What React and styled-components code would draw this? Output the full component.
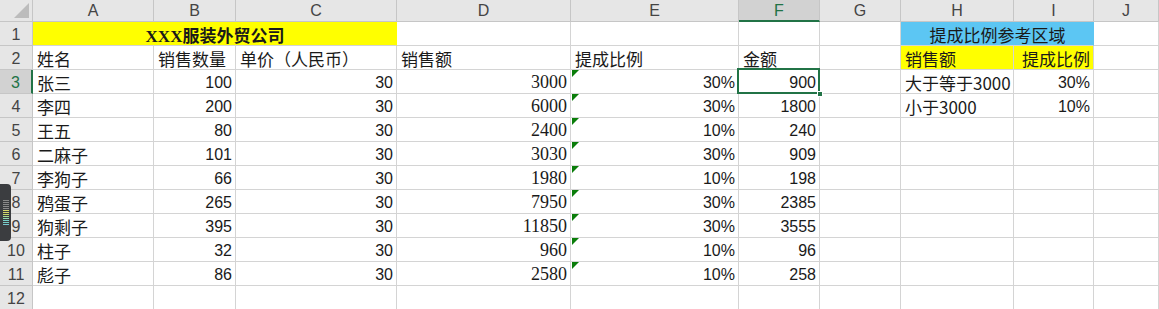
import styled, { createGlobalStyle, css } from "styled-components";

const GlobalStyle = createGlobalStyle`
  html, body {
    margin: 0;
    padding: 0;
    background: #ffffff;
    overflow: hidden;
  }
  * { box-sizing: border-box; }
`;

const cjk = `"Noto Sans CJK SC", "Noto Sans", sans-serif`;
const sans = `"Liberation Sans", "Noto Sans CJK SC", sans-serif`;
const serif = `"Liberation Serif", "Noto Sans CJK SC", serif`;
const green = "#217346";

const Sheet = styled.div`
  position: relative;
  display: grid;
  grid-template-columns: 33px 121px 82px 161px 174px 168px 81px 81px 113px 80px 1fr;
  grid-template-rows: 22px repeat(12, 24px);
  width: 1159px;
  height: 309px;
  overflow: hidden;
  background: #fff;
`;

const Corner = styled.div`
  position: relative;
  background: #e6e6e6;
  border-right: 1px solid #c6c6c6;
  border-bottom: 1px solid #c6c6c6;

  &::after {
    content: "";
    position: absolute;
    right: 3px;
    bottom: 3px;
    width: 0;
    height: 0;
    border-left: 15px solid transparent;
    border-bottom: 15px solid #bcbcbc;
  }
`;

const ColHead = styled.div`
  display: flex;
  align-items: center;
  justify-content: center;
  font-family: ${sans};
  font-size: 16px;
  color: ${(p) => (p.$active ? green : "#444")};
  background: ${(p) => (p.$active ? "#d2d2d2" : "#e6e6e6")};
  border-right: 1px solid #c6c6c6;
  border-bottom: ${(p) => (p.$active ? `2px solid ${green}` : "1px solid #c6c6c6")};
  padding-top: ${(p) => (p.$active ? "1px" : "0")};
`;

const RowHead = styled.div`
  display: flex;
  align-items: center;
  justify-content: center;
  font-family: ${sans};
  font-size: 16px;
  padding-top: 2px;
  color: ${(p) => (p.$active ? green : "#444")};
  background: ${(p) => (p.$active ? "#d2d2d2" : "#e6e6e6")};
  border-right: ${(p) => (p.$active ? `2px solid ${green}` : "1px solid #c6c6c6")};
  border-bottom: 1px solid #c6c6c6;
`;

const fonts = { cjk, sans, serif };

const Cell = styled.div`
  position: relative;
  display: flex;
  align-items: center;
  justify-content: ${(p) =>
    p.$align === "right" ? "flex-end" : p.$align === "center" ? "center" : "flex-start"};
  grid-column: span ${(p) => p.$span || 1};
  padding: 2px 3px 0 4px;
  font-family: ${(p) => fonts[p.$font || "cjk"]};
  font-size: ${(p) => p.$size || (p.$font === "sans" ? 16 : 17)}px;
  font-weight: ${(p) => (p.$bold ? 700 : 400)};
  color: #1a1a1a;
  white-space: nowrap;
  background: ${(p) => p.$bg || "#fff"};
  border-right: 1px solid ${(p) => (p.$bg && p.$span > 1 ? p.$bg : "#d4d4d4")};
  border-bottom: 1px solid #d4d4d4;

  ${(p) =>
    p.$flag &&
    css`
      &::before {
        content: "";
        position: absolute;
        left: 1px;
        top: 0;
        width: 0;
        height: 0;
        border-top: 7px solid #0a7d0a;
        border-right: 7px solid transparent;
      }
    `}

  ${(p) =>
    p.$selected &&
    css`
      &::after {
        content: "";
        position: absolute;
        left: -2px;
        top: -2px;
        right: -1px;
        bottom: -1px;
        border: 2px solid ${green};
        pointer-events: none;
      }
    `}
`;

const Handle = styled.span`
  position: absolute;
  right: -4px;
  bottom: -4px;
  width: 6px;
  height: 6px;
  background: ${green};
  border: 1px solid #fff;
  z-index: 2;
`;

const Scrubber = styled.div`
  position: absolute;
  left: 0;
  top: 184px;
  width: 11px;
  height: 57px;
  background: #3b3d40;
  border-radius: 0 4px 4px 0;
  display: flex;
  flex-direction: column;
  justify-content: center;
  gap: 1px;
  padding: 4px 2px 4px 3px;
  z-index: 3;
`;

const Tick = styled.span`
  display: block;
  height: 1px;
  width: 6px;
  background: ${(p) => p.$c};
`;

const columns = ["A", "B", "C", "D", "E", "F", "G", "H", "I", "J"];

const people = [
  ["张三", 100, 3000, "30%", 900],
  ["李四", 200, 6000, "30%", 1800],
  ["王五", 80, 2400, "10%", 240],
  ["二麻子", 101, 3030, "30%", 909],
  ["李狗子", 66, 1980, "10%", 198],
  ["鸦蛋子", 265, 7950, "30%", 2385],
  ["狗剩子", 395, 11850, "30%", 3555],
  ["柱子", 32, 960, "10%", 96],
  ["彪子", 86, 2580, "10%", 258],
];

const lookup = [
  ["大于等于3000", "30%"],
  ["小于3000", "10%"],
];

const ticks = ["#8a8a8a", "#8a8a8a", "#8a8a8a", "#8a8a8a", "#8a8a8a", "#d8d86a", "#d8d86a", "#c8d86a", "#a8d890", "#8fd8b0", "#78d0c8", "#78d0c8", "#78c8d0"];

function Empty({ n }) {
  return Array.from({ length: n }, (_, i) => <Cell key={i} />);
}

export default function App() {
  return (
    <>
      <GlobalStyle />
      <Sheet>
        <Corner />
        {columns.map((c) => (
          <ColHead key={c} $active={c === "F"}>{c}</ColHead>
        ))}

        <RowHead>1</RowHead>
        <Cell $span={3} $align="center" $bg="#ffff00" $bold $font="serif">XXX服装外贸公司</Cell>
        <Empty n={4} />
        <Cell $span={2} $align="center" $bg="#5cc6f3">提成比例参考区域</Cell>
        <Cell />

        <RowHead>2</RowHead>
        <Cell>姓名</Cell>
        <Cell>销售数量</Cell>
        <Cell>单价（人民币）</Cell>
        <Cell>销售额</Cell>
        <Cell>提成比例</Cell>
        <Cell>金额</Cell>
        <Cell />
        <Cell $bg="#ffff00">销售额</Cell>
        <Cell $bg="#ffff00" $align="right">提成比例</Cell>
        <Cell />

        {people.map(([name, qty, total, rate, amount], i) => (
          <Row key={name} n={i + 3} name={name} qty={qty} total={total} rate={rate} amount={amount} side={lookup[i]} />
        ))}

        <RowHead>12</RowHead>
        <Empty n={10} />
      </Sheet>
      <Scrubber>
        {ticks.map((c, i) => (
          <Tick key={i} $c={c} />
        ))}
      </Scrubber>
    </>
  );
}

function Row({ n, name, qty, total, rate, amount, side }) {
  const selected = n === 3;
  return (
    <>
      <RowHead $active={selected}>{n}</RowHead>
      <Cell>{name}</Cell>
      <Cell $align="right" $font="sans">{qty}</Cell>
      <Cell $align="right" $font="sans">30</Cell>
      <Cell $align="right" $font="serif" $size={18}>{total}</Cell>
      <Cell $align="right" $font="sans" $flag>{rate}</Cell>
      <Cell $align="right" $font="sans" $selected={selected}>
        {amount}
        {selected && <Handle />}
      </Cell>
      <Cell />
      <Cell>{side ? side[0] : ""}</Cell>
      <Cell $align="right" $font="sans">{side ? side[1] : ""}</Cell>
      <Cell />
    </>
  );
}
